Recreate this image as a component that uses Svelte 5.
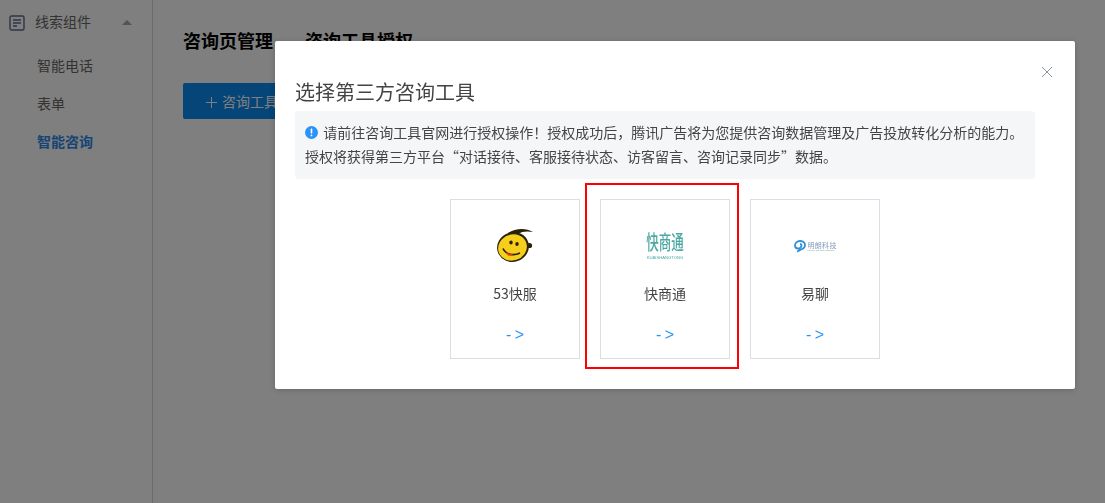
<script>
  const menu = [
    { label: '智能电话', active: false },
    { label: '表单', active: false },
    { label: '智能咨询', active: true }
  ];
</script>

<div class="page">
  <aside class="sidebar">
    <div class="group">
      <svg class="group-icon" width="16" height="16" viewBox="0 0 16 16" fill="none" stroke="#5f6a8a" stroke-width="1.4">
        <rect x="1" y="1" width="14" height="14" rx="1.5" />
        <path d="M4 5h8M4 8h8M4 11h4" />
      </svg>
      <span class="group-label">线索组件</span>
      <span class="caret"></span>
    </div>
    <nav class="menu">
      {#each menu as item}
        <div class="menu-item" class:active={item.active}>{item.label}</div>
      {/each}
    </nav>
  </aside>
  <main class="main">
    <div class="tabs">
      <span>咨询页管理</span>
      <span>咨询工具授权</span>
    </div>
    <button class="primary">
      <svg class="plus" width="11" height="11" viewBox="0 0 11 11" stroke="#fff" stroke-width="1" fill="none">
        <path d="M5.5 0v11M0 5.5h11" />
      </svg>咨询工具授权
    </button>
  </main>
</div>

<div class="overlay">
  <section class="dialog">
    <svg class="close" width="12" height="12" viewBox="0 0 12 12" stroke="#8a95a5" stroke-width="1" fill="none">
      <path d="M1 1l10 10M11 1L1 11" />
    </svg>
    <h2>选择第三方咨询工具</h2>
    <div class="notice">
      <p>
        <svg class="info" width="13" height="13" viewBox="0 0 13 13">
          <circle cx="6.5" cy="6.5" r="6.5" fill="#2b93f5" />
          <rect x="5.7" y="2.6" width="1.6" height="5" rx=".6" fill="#fff" />
          <rect x="5.7" y="8.6" width="1.6" height="1.7" rx=".6" fill="#fff" />
        </svg>
        请前往咨询工具官网进行授权操作！授权成功后，腾讯广告将为您提供咨询数据管理及广告投放转化分析的能力。
      </p>
      <p>授权将获得第三方平台“对话接待、客服接待状态、访客留言、咨询记录同步”数据。</p>
    </div>
    <div class="cards">
      <div class="card">
        <div class="logo">
          <svg width="38" height="36" viewBox="0 0 38 36">
            <ellipse cx="17" cy="19" rx="16" ry="14.8" fill="#2a2208" transform="rotate(-18 17 19)" />
            <path d="M12 5C20 0 30 0 37 4C32 3 26 3 22 6Z" fill="#2a2208" />
            <circle cx="33.5" cy="17.5" r="2.6" fill="#2a2208" />
            <ellipse cx="16.5" cy="19.5" rx="14.5" ry="13" fill="#f6cf1c" transform="rotate(-18 16.5 19.5)" />
            <ellipse cx="15" cy="14.5" rx="1.7" ry="2.1" fill="#2a2208" />
            <ellipse cx="21" cy="16" rx="1.7" ry="2.1" fill="#2a2208" />
            <path d="M7 20.5C10 27 18 28 24 25" fill="none" stroke="#2a2208" stroke-width="1.7" />
            <path d="M10 24.5C11 28.5 15 28.5 17 26.5Z" fill="#d8401c" />
          </svg>
        </div>
        <div class="name">53快服</div>
        <div class="arrow">- &gt;</div>
      </div>
      <div class="card">
        <div class="logo">
          <div class="ksh">
            <span class="ksh-cn">快商通</span>
            <span class="ksh-en">KUAISHANGTONG</span>
          </div>
        </div>
        <div class="name">快商通</div>
        <div class="arrow">- &gt;</div>
      </div>
      <div class="card">
        <div class="logo">
          <div class="ml">
            <svg width="12" height="13" viewBox="0 0 12 13" fill="none" stroke="#2f8fd8" stroke-width="1.8">
              <path d="M3 11.5C5 11 6 10 7 9.5C10 8.5 11 6.5 11 5C11 2.5 8.5 1 6 1C3 1 1 3 1 5.5C1 7.5 2.5 8.5 4 8.5C6 8.5 7.5 7 7.5 5.5C7.5 4.5 6.8 4 6 4" />
            </svg>
            <div class="ml-text">
              <span class="ml-cn">明朗科技</span>
              <span class="ml-en">MINGLANG TECHNOLOGY</span>
            </div>
          </div>
        </div>
        <div class="name">易聊</div>
        <div class="arrow">- &gt;</div>
      </div>
    </div>
    <div class="highlight"></div>
  </section>
</div>

<style>
  :global(body) {
    margin: 0;
    overflow: hidden;
    background: #fff;
  }
  .page,
  .overlay {
    font-family: "Noto Sans CJK SC", "Liberation Sans", sans-serif;
  }
  .page {
    display: flex;
    height: 503px;
    background: #fff;
    color: #333;
    font-size: 14px;
  }
  .sidebar {
    width: 152px;
    flex: none;
    border-right: 1px solid #d8d8d8;
  }
  .group {
    display: flex;
    align-items: center;
    height: 44px;
    margin-bottom: 2px;
    padding-left: 9px;
    color: #666;
  }
  .group-icon {
    margin-top: 2px;
  }
  .group-label {
    margin-left: 10px;
    line-height: 42px;
    height: 44px;
  }
  .caret {
    margin-left: 31px;
    margin-top: 1px;
    border-left: 5px solid transparent;
    border-right: 5px solid transparent;
    border-bottom: 5px solid #a8a8a8;
  }
  .menu {
    padding-left: 37px;
  }
  .menu-item {
    height: 38px;
    line-height: 38px;
    color: #666;
  }
  .menu-item.active {
    color: #2d88e8;
    font-weight: 700;
  }
  .main {
    flex: 1;
    padding: 27px 0 0 30px;
  }
  .tabs {
    display: flex;
    gap: 32px;
    font-size: 18px;
    font-weight: 700;
    line-height: 26px;
    color: #000;
  }
  .primary {
    display: block;
    width: 150px;
    height: 36px;
    margin-top: 30px;
    padding: 0 0 0 23px;
    border: 0;
    border-radius: 2px;
    background: #0a8af0;
    color: #fff;
    font: inherit;
    text-align: left;
    white-space: nowrap;
  }
  .plus {
    margin-right: 5px;
    vertical-align: -1px;
  }
  .overlay {
    position: fixed;
    inset: 0;
    padding: 41px 0 0 275px;
    background: rgba(0, 0, 0, 0.5);
  }
  .dialog {
    position: relative;
    box-sizing: border-box;
    width: 800px;
    height: 348px;
    padding: 36px 40px 0 20px;
    border-radius: 2px;
    background: #fff;
    box-shadow: 0 1px 6px rgba(0, 0, 0, 0.2);
    color: #333;
  }
  .close {
    position: absolute;
    top: 25px;
    right: 22px;
  }
  h2 {
    margin: 0;
    font-size: 20px;
    font-weight: 400;
    line-height: 30px;
    color: #444;
  }
  .notice {
    margin-top: 4px;
    padding: 9px 10px 11px;
    border-radius: 4px;
    background: #f5f6f8;
    font-size: 14px;
    line-height: 24px;
    color: #444;
    white-space: nowrap;
  }
  p {
    margin: 0;
  }
  .info {
    vertical-align: -1px;
    margin-right: 2px;
  }
  .cards {
    display: flex;
    justify-content: center;
    gap: 20px;
    margin-top: 20px;
  }
  .card {
    box-sizing: border-box;
    display: flex;
    flex-direction: column;
    align-items: center;
    width: 130px;
    height: 160px;
    border: 1px solid #dcdee6;
    background: #fff;
  }
  .logo {
    display: flex;
    align-items: center;
    justify-content: center;
    width: 100%;
    height: 36px;
    margin-top: 28px;
  }
  .name {
    margin-top: 15px;
    font-size: 14px;
    line-height: 28px;
    color: #444;
  }
  .arrow {
    margin-top: 18px;
    font-family: "Liberation Sans", sans-serif;
    font-size: 16px;
    line-height: 20px;
    word-spacing: -1px;
    color: #2b93f5;
  }
  .ksh {
    display: flex;
    flex-direction: column;
    align-items: center;
    color: #4aa8a4;
  }
  .ksh-cn {
    font-size: 12.5px;
    line-height: 20px;
    font-weight: 500;
    transform: scaleY(1.6);
    white-space: nowrap;
  }
  .ksh-en {
    margin-top: 3px;
    font-family: "Liberation Sans", sans-serif;
    font-size: 4.2px;
    line-height: 5px;
    white-space: nowrap;
  }
  .ml {
    display: flex;
    align-items: center;
    gap: 2px;
    color: #7f9cb8;
  }
  .ml-text {
    display: flex;
    flex-direction: column;
    align-items: flex-start;
    width: 29px;
  }
  .ml-cn {
    font-size: 7px;
    line-height: 8px;
    letter-spacing: 0.3px;
    white-space: nowrap;
  }
  .ml-en {
    font-family: "Liberation Sans", sans-serif;
    font-size: 2.2px;
    line-height: 3px;
    white-space: nowrap;
  }
  .highlight {
    position: absolute;
    left: 310px;
    top: 142px;
    width: 154px;
    height: 186px;
    box-sizing: border-box;
    border: 2px solid #f00;
  }
</style>
